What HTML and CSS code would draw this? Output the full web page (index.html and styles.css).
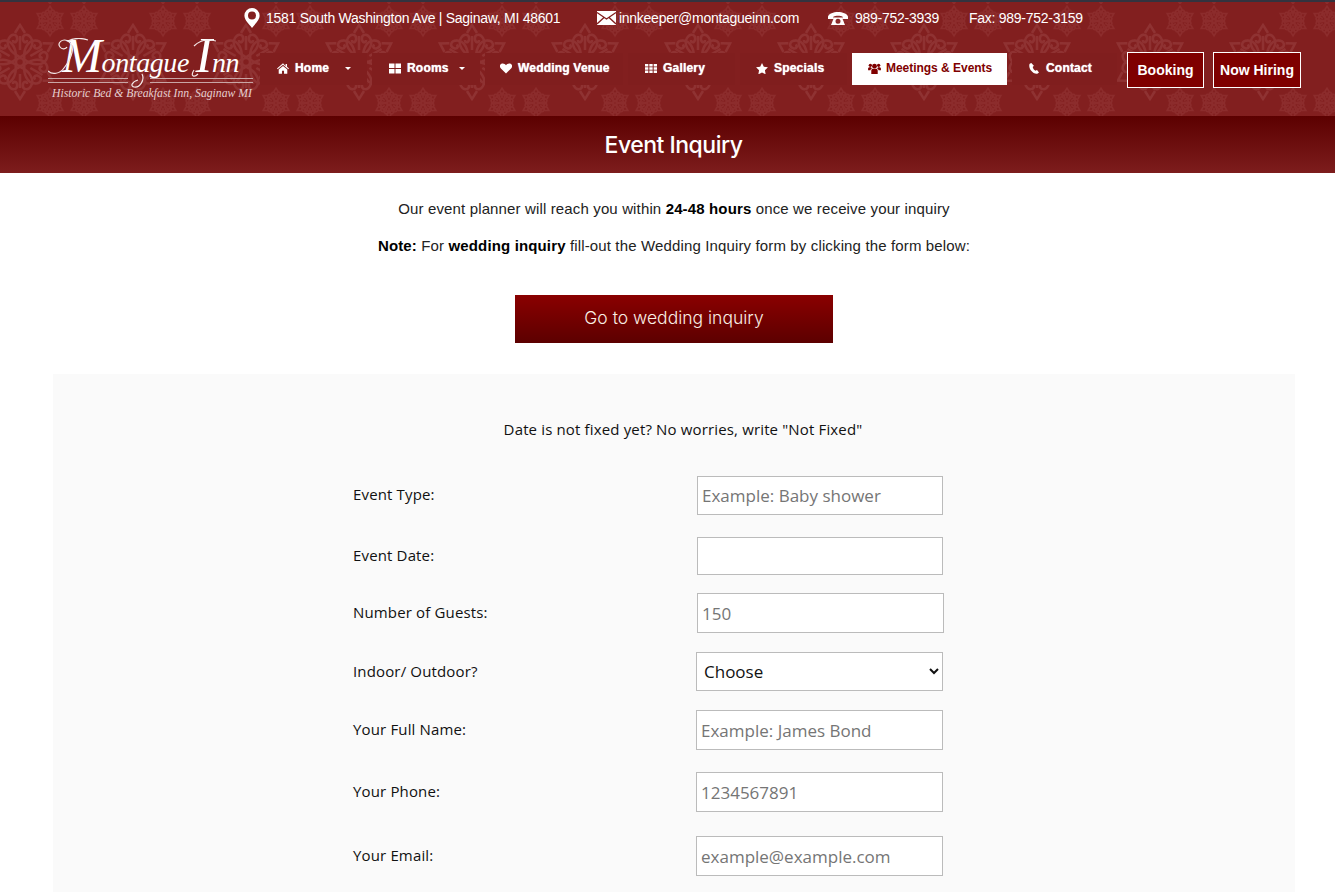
FILE: index.html
```html
<!DOCTYPE html>
<html lang="en">
<head>
<meta charset="utf-8">
<title>Event Inquiry - Montague Inn</title>
<link rel="stylesheet" href="styles.css">
</head>
<body>
<header class="site-header">
  <svg class="damask" width="100%" height="100%" aria-hidden="true">
    <defs>
      <g id="petal">
        <path d="M0-5C-9-9-15-17-11-24C-8-29-2-28-3-22C-4-19-7-19-7-22M0-5C9-9 15-17 11-24C8-29 2-28 3-22C4-19 7-19 7-22M0-12V-26M-5-29L0-37L5-29"/>
      </g>
      <g id="large">
        <use href="#petal"/><use href="#petal" transform="rotate(60)"/><use href="#petal" transform="rotate(120)"/>
        <use href="#petal" transform="rotate(180)"/><use href="#petal" transform="rotate(240)"/><use href="#petal" transform="rotate(300)"/>
        <circle r="4"/>
      </g>
      <g id="small">
        <use href="#large" transform="scale(.4)" stroke-width="4"/>
      </g>
      <pattern id="tile" x="20" y="2" width="113" height="114" patternUnits="userSpaceOnUse">
        <g class="damask-ink">
          <use href="#large" x="0" y="58"/><use href="#large" x="113" y="58"/>
          <g class="damask-small">
            <use href="#small" x="30" y="17"/><use href="#small" x="64" y="17"/>
            <use href="#small" x="30" y="99"/><use href="#small" x="64" y="99"/>
          </g>
        </g>
      </pattern>
    </defs>
    <rect width="100%" height="100%" fill="url(#tile)"/>
  </svg>

  <ul class="contact-bar">
    <li class="contact contact-address">
      <svg class="ci ci-pin" viewBox="0 0 16 20"><path fill-rule="evenodd" d="M8 0a7.6 7.6 0 0 1 7.6 7.6C15.600 12.500 10.500 16.500 8 20 5.500 16.500.4 12.500.4 7.600A7.600 7.600 0 0 1 8 0zm0 3.600a4 4 0 1 0 0 8 4 4 0 0 0 0-8z"/></svg>
      <span>1581 South Washington Ave | Saginaw, MI 48601</span>
    </li>
    <li class="contact contact-mail">
      <svg class="ci ci-mail" viewBox="0 0 19 14"><rect width="19" height="14"/><path class="ci-cut" d="M0 1.500 9.500 8 19 1.500M0 13 7 6.500M19 13 12 6.500"/></svg>
      <span>innkeeper@montagueinn.com</span>
    </li>
    <li class="contact contact-phone">
      <svg class="ci ci-tel" viewBox="0 0 20 13"><path fill-rule="evenodd" d="M0 4.500C1 1.500 5.500 0 10 0s9 1.500 10 4.500V7h-5.500V4.600c-1-.5-2.800-.8-4.500-.8s-3.500.3-4.500.8V7H0zM6 5.500h8l3 7.500H3zM10 6.800a2.500 2.500 0 1 0 0 5 2.500 2.500 0 0 0 0-5z"/></svg>
      <span>989-752-3939</span>
    </li>
    <li class="contact contact-fax"><span>Fax: 989-752-3159</span></li>
  </ul>

  <div class="main-row">
    <a class="logo" href="#">
      <svg class="logo-flourish" viewBox="0 0 212 56" aria-hidden="true">
        <path d="M0 33C4 37 12 36 16 30 24 20 28 8 20 3 14 0 9 5 12 9 14 12 18 11 19 9M20 3C26 0 34 0 40 2M94 36C97 42 92 50 86 49 82 48 84 44 90 42M146 8C152 2 160 1 168 3M150 36C146 40 142 38 146 32"/>
      </svg>
      <span class="logo-name"><span class="logo-cap">M</span>ontague <span class="logo-cap logo-cap-i">I</span>nn</span>
      <span class="logo-rule"><span class="logo-rule-a"></span><span class="logo-rule-b"></span></span>
      <span class="logo-sub">Historic Bed &amp; Breakfast Inn, Saginaw MI</span>
    </a>
    <nav class="nav">
      <a class="nav-item nav-home" href="#">
        <svg class="ni" viewBox="0 0 14 12"><path d="M7 0 0 6l.8.9L7 1.700l6.200 5.200.8-.9-2.300-2V.8H10v2.300zM2 7.300V12h3.800V8.500h2.400V12H12V7.300L7 3.100z"/></svg>
        <span>Home</span><span class="caret"></span>
      </a>
      <a class="nav-item nav-rooms" href="#">
        <svg class="ni" viewBox="0 0 12 10"><path d="M0 0h5.500v4.500H0zM6.500 0H12v4.500H6.500zM0 5.500h5.500V10H0zM6.500 5.500H12V10H6.500z"/></svg>
        <span>Rooms</span><span class="caret"></span>
      </a>
      <a class="nav-item nav-wedding" href="#">
        <svg class="ni" viewBox="0 0 13 11"><path d="M6.500 11 1 5.500C-1.500 2.500.5 0 3 0c1.500 0 2.700.8 3.500 2C7.300.8 8.500 0 10 0c2.500 0 4.500 2.500 2 5.500z"/></svg>
        <span>Wedding Venue</span>
      </a>
      <a class="nav-item nav-gallery" href="#">
        <svg class="ni" viewBox="0 0 13 10"><path d="M0 0h3.600v2.800H0zM4.700 0h3.600v2.800H4.700zM9.400 0H13v2.800H9.400zM0 3.600h3.600v2.800H0zM4.700 3.600h3.600v2.800H4.700zM9.400 3.600H13v2.800H9.400zM0 7.200h3.600V10H0zM4.700 7.200h3.600V10H4.700zM9.400 7.200H13V10H9.400z"/></svg>
        <span>Gallery</span>
      </a>
      <a class="nav-item nav-specials" href="#">
        <svg class="ni" viewBox="0 0 13 12"><path d="m6.500 0 2 4.100 4.500.6-3.300 3.200.8 4.500-4-2.100-4 2.100.8-4.500L0 4.700l4.500-.6z"/></svg>
        <span>Specials</span>
      </a>
      <a class="nav-item nav-meetings is-active" href="#">
        <svg class="ni ni-users" viewBox="0 0 14 12"><circle cx="7" cy="3.500" r="2.600"/><circle cx="2.500" cy="2.500" r="1.800"/><circle cx="11.500" cy="2.500" r="1.800"/><path d="M3.500 12V8.500C3.500 7 4.500 6.300 5.500 6.300h3c1 0 2 .7 2 2.200V12zM0 8V6c0-.8.8-1.500 1.500-1.500h1.700c.2.700.5 1.100 1 1.500-1 .5-1.600 1.300-1.600 2zM14 8V6c0-.8-.8-1.500-1.500-1.500h-1.700c-.2.700-.5 1.100-1 1.500 1 .5 1.600 1.300 1.600 2z"/></svg>
        <span>Meetings &amp; Events</span>
      </a>
      <a class="nav-item nav-contact" href="#">
        <svg class="ni ni-phone" viewBox="0 0 10 11"><path d="M2.300 0 .7.800C-.3 2.500.5 5.500 2 7.600c1.700 2.300 4.300 3.600 6.300 3.200L10 9.500 8 7 6.400 7.800C5 7 4 5.500 3.700 4l1.200-1.200z"/></svg>
        <span>Contact</span>
      </a>
    </nav>
    <a class="cta cta-booking" href="#">Booking</a>
    <a class="cta cta-hiring" href="#">Now Hiring</a>
  </div>
</header>

<section class="title-band"><h1 class="title">Event Inquiry</h1></section>

<main class="content">
  <p class="intro intro-first">Our event planner will reach you within <b>24-48 hours</b> once we receive your inquiry</p>
  <p class="intro intro-second"><b>Note:</b> For <b>wedding inquiry</b> fill-out the Wedding Inquiry form by clicking the form below:</p>
  <a class="wedding-btn" href="#">Go to wedding inquiry</a>

  <form class="panel">
    <p class="panel-note">Date is not fixed yet? No worries, write "Not Fixed"</p>
    <div class="row row-type">
      <label class="row-label">Event Type:</label>
      <input class="field" type="text" placeholder="Example: Baby shower">
    </div>
    <div class="row row-date">
      <label class="row-label">Event Date:</label>
      <input class="field" type="text">
    </div>
    <div class="row row-guests">
      <label class="row-label">Number of Guests:</label>
      <input class="field" type="text" placeholder="150">
    </div>
    <div class="row row-place">
      <label class="row-label">Indoor/ Outdoor?</label>
      <select class="field field-select"><option>Choose</option><option>Indoor</option><option>Outdoor</option></select>
    </div>
    <div class="row row-name">
      <label class="row-label">Your Full Name:</label>
      <input class="field" type="text" placeholder="Example: James Bond">
    </div>
    <div class="row row-phone">
      <label class="row-label">Your Phone:</label>
      <input class="field" type="text" placeholder="1234567891">
    </div>
    <div class="row row-email">
      <label class="row-label">Your Email:</label>
      <input class="field" type="text" placeholder="example@example.com">
    </div>
  </form>
</main>
</body>
</html>
```

FILE: styles.css
```css
* { box-sizing: border-box; }
html, body { margin: 0; padding: 0; height: 892px; overflow: hidden; background: #fff; }
body { font-family: "Liberation Sans", Arial, sans-serif; color: #111; }
a { text-decoration: none; color: inherit; }
p, h1, ul { margin: 0; padding: 0; }
ul { list-style: none; }

.site-header {
  position: relative;
  height: 116px;
  background: #821f1f;
  border-top: 2px solid #33333f;
  overflow: hidden;
}
.damask { position: absolute; left: 0; top: 0; }
.damask-ink { fill: none; stroke: #8f3232; stroke-width: 2.5; }
.damask-small { stroke: #8c2c2c; }

.contact-bar {
  position: relative;
  display: flex;
  align-items: center;
  height: 32px;
  padding: 0 0 0 244px;
  color: #fff;
  font-size: 14px;
  letter-spacing: -.27px;
}
.contact { display: flex; align-items: center; white-space: nowrap; flex: none; }
.ci { fill: #fff; flex: none; }
.ci-cut { fill: none; stroke: #821f1f; stroke-width: 1.3; }
.ci-pin { width: 16px; height: 20px; margin-right: 6px; }
.ci-mail { width: 19px; height: 14px; margin-right: 3px; }
.ci-tel { width: 20px; height: 13px; margin-right: 7px; }
.contact-address { width: 353px; }
.contact-mail { width: 231px; }
.contact-phone { width: 141px; }

.main-row {
  position: relative;
  display: flex;
  align-items: flex-start;
  padding-left: 48px;
  height: 82px;
}
.logo { position: relative; display: block; width: 212px; color: #fff; flex: none; }
.logo-flourish {
  position: absolute;
  left: 0;
  top: 4px;
  width: 212px;
  height: 56px;
  fill: none;
  stroke: #f3e6e6;
  stroke-width: 1.200;
}
.logo-name {
  display: block;
  height: 42px;
  padding: 14px 0 0 14px;
  font-family: "Liberation Serif", "Times New Roman", serif;
  font-style: italic;
  font-size: 28px;
  line-height: 30px;
  white-space: nowrap;
  letter-spacing: -.4px;
}
.logo-cap { font-size: 48px; line-height: 0; }
.logo-cap-i { font-size: 50px; }
.logo-rule { display: flex; justify-content: space-between; width: 205px; height: 5px; margin-top: 2px; }
.logo-rule-a, .logo-rule-b { display: block; height: 5px; border-top: 1px solid #c9a5a5; border-bottom: 1px solid #c9a5a5; }
.logo-rule-a { width: 80px; }
.logo-rule-b { width: 103px; }
.logo-sub {
  display: block;
  font-family: "Liberation Serif", "Times New Roman", serif;
  font-style: italic;
  font-size: 11.700px;
  line-height: 14px;
  margin: 4px 0 0 4px;
  color: #e6cfcf;
  white-space: nowrap;
}

.nav { display: flex; gap: 5px; margin-top: 19px; flex: none; }
.nav-item {
  display: flex;
  align-items: center;
  height: 32px;
  padding-left: 17px;
  padding-bottom: 2px;
  background: #801e1e;
  color: #fff;
  font-weight: 700;
  font-size: 12px;
  letter-spacing: .2px;
  white-space: nowrap;
  text-shadow: 0 0 1px #fff;
}
.ni { fill: #fff; flex: none; margin-right: 6px; height: 11px; width: 12px; }
.caret {
  width: 0; height: 0;
  margin-left: 16px;
  border-left: 3px solid transparent;
  border-right: 3px solid transparent;
  border-top: 3px solid #fff;
}
.nav-home { width: 107px; }
.nav-rooms { width: 108px; }
.nav-rooms .caret { margin-left: 10px; }
.nav-wedding { width: 138px; padding-left: 15px; }
.nav-gallery { width: 107px; padding-left: 17px; }
.nav-specials { width: 107px; padding-left: 16px; }
.nav-meetings { width: 155px; padding-left: 16px; }
.nav-contact { width: 105px; padding-left: 17px; }
.is-active { background: #fff; color: #7f0000; text-shadow: none; letter-spacing: -.03px; }
.is-active .ni { fill: #7f0000; width: 13px; margin-right: 5px; }
.ni-phone { width: 10px; margin-right: 7px; }

.cta {
  display: flex;
  align-items: center;
  justify-content: center;
  height: 36px;
  margin-top: 18px;
  background: #7f0000;
  border: 1px solid #fff;
  color: #fff;
  font-weight: 700;
  font-size: 14px;
  flex: none;
}
.cta-booking { width: 77px; margin-left: 10px; }
.cta-hiring { width: 88px; margin-left: 9px; }

.title-band {
  height: 57px;
  padding-left: 12px;
  display: flex;
  align-items: center;
  justify-content: center;
  background: linear-gradient(#5c0000, #7d1d1d);
}
.title {
  font-family: Inter, "Liberation Sans", sans-serif;
  font-weight: 500;
  font-size: 23px;
  letter-spacing: -.5px;
  color: #fff;
}

.content { display: flex; flex-direction: column; align-items: center; padding-left: 13px; }
.intro { font-size: 15px; line-height: 20px; letter-spacing: .14px; color: #222; white-space: nowrap; }
.intro b { color: #000; }
.intro-first { margin-top: 26px; }
.intro-second { margin-top: 17px; }
.wedding-btn {
  display: flex;
  align-items: center;
  justify-content: center;
  width: 318px;
  height: 48px;
  margin-top: 39px;
  padding-bottom: 3px;
  background: linear-gradient(#8a0000, #5c0000);
  color: #faeee4;
  font-family: Inter, "Liberation Sans", sans-serif;
  font-weight: 300;
  font-size: 17.500px;
}

.panel {
  flex: none;
  width: 1242px;
  height: 518px;
  margin-top: 31px;
  background: #fafafa;
  font-family: "Open Sans", "Liberation Sans", sans-serif;
  color: #111;
  font-size: 15px;
  letter-spacing: .15px;
}
.panel-note { padding: 46px 0 0 18px; line-height: 19px; text-align: center; }
.row { display: flex; align-items: center; padding-left: 300px; }
.row-label { width: 344px; flex: none; padding-bottom: 2px; }
.field {
  width: 246px;
  height: 39px;
  padding: 0 4px;
  border: 1px solid #bbb;
  border-radius: 0;
  background: #fff;
  font-family: "Open Sans", "Liberation Sans", sans-serif;
  font-size: 17px;
  letter-spacing: 0;
  color: #111;
  outline: none;
}
.field::placeholder { color: #757575; }
.field-select { padding-left: 3px; }

.row-type { margin-top: 37px; }
.row-type .row-label { padding-bottom: 3px; }
.row-date { margin-top: 22px; }
.row-date .field { height: 38px; }
.row-guests { margin-top: 18px; }
.row-guests .field { height: 40px; width: 247px; }
.row-place { margin-top: 19px; }
.row-place .field { margin-left: -1px; width: 247px; }
.row-name { margin-top: 19px; }
.row-name .field { height: 40px; margin-left: -1px; width: 247px; }
.row-phone { margin-top: 22px; }
.row-phone .field { height: 40px; margin-left: -1px; width: 247px; }
.row-email { margin-top: 24px; }
.row-email .field { height: 40px; margin-left: -1px; width: 247px; }
```
